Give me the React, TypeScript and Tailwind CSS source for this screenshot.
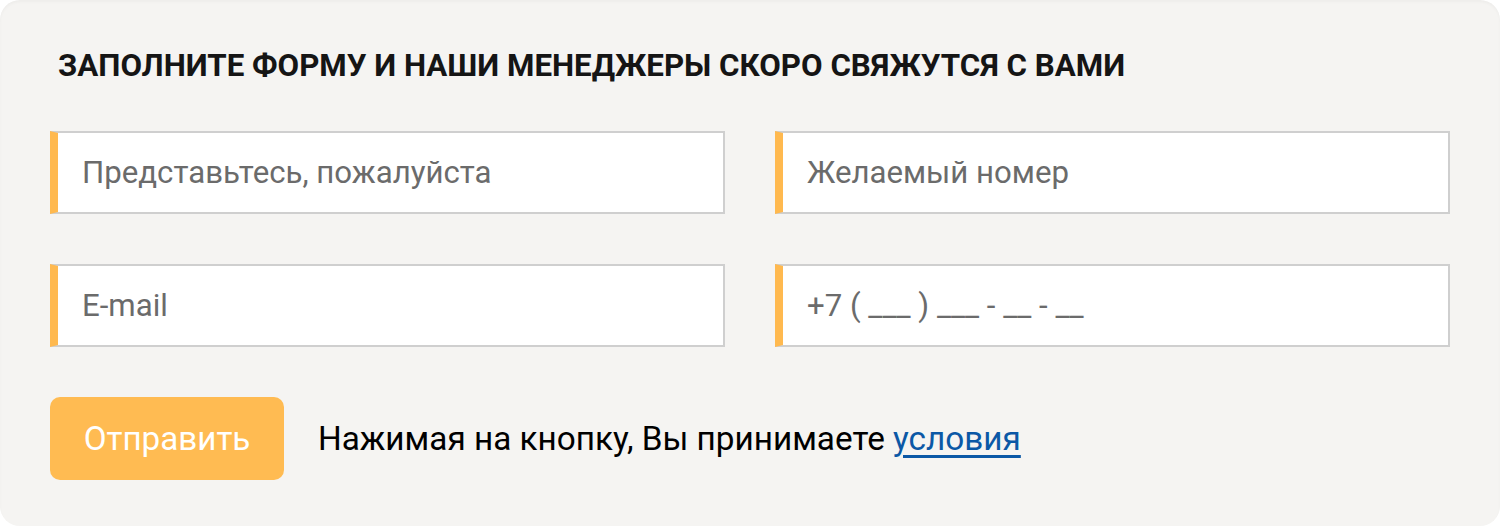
import React from "react";

function Field({ placeholder }: { placeholder: string }) {
  return (
    <div className="h-[83px] bg-white border-2 border-[#cfcfcf] border-l-[8px] border-l-[#ffb94f] flex items-center pl-[24px]">
      <span className="text-[31.2px] leading-none text-[#6b6b6b]">{placeholder}</span>
    </div>
  );
}

export default function App() {
  return (
    <div className="w-[1500px] h-[526px] bg-white" style={{ fontFamily: "Roboto, 'Noto Sans', sans-serif" }}>
      <div className="w-full h-full bg-[#f5f4f2] rounded-[20px] shadow-[inset_0_2px_3px_rgba(0,0,0,0.03)] px-[50px] pt-[48px]">
        <h2 className="pl-[8px] text-[31.3px] leading-[36px] font-bold uppercase text-[#151515]">
          Заполните форму и наши менеджеры скоро свяжутся с вами
        </h2>
        <div className="mt-[47px] grid grid-cols-2 gap-x-[50px] gap-y-[50px]">
          <Field placeholder="Представьтесь, пожалуйста" />
          <Field placeholder="Желаемый номер" />
          <Field placeholder="E-mail" />
          <Field placeholder="+7 ( ___ ) ___ - __ - __" />
        </div>
        <div className="mt-[50px] flex items-center gap-[34px]">
          <button className="w-[234px] h-[83px] rounded-[10px] bg-[#ffbb52] text-white text-[33.2px] leading-none">
            Отправить
          </button>
          <p className="text-[33.3px] leading-none text-black">
            Нажимая на кнопку, Вы принимаете{" "}
            <a href="#" className="text-[#0b58a6] underline underline-offset-[5px]">
              условия
            </a>
          </p>
        </div>
      </div>
    </div>
  );
}
